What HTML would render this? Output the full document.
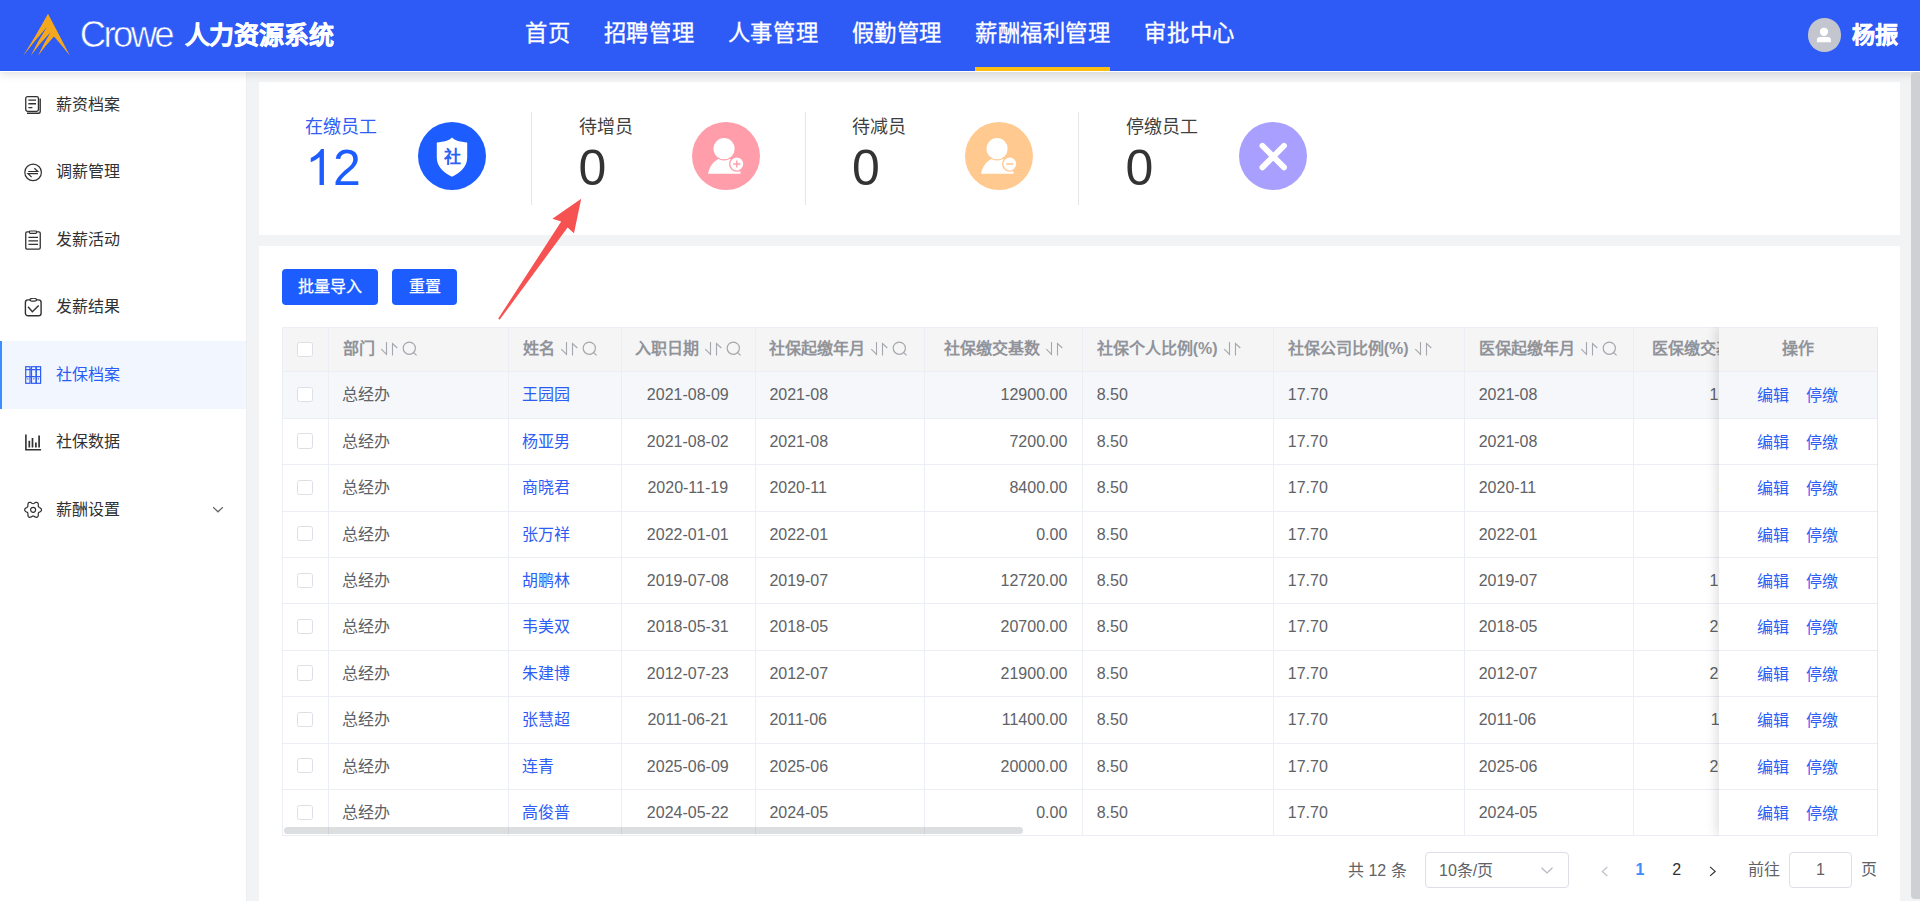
<!DOCTYPE html>
<html lang="zh-CN"><head><meta charset="utf-8"><title>社保档案</title>
<style>
*{box-sizing:border-box;margin:0;padding:0}
html,body{width:1920px;height:901px;overflow:hidden}
body{position:relative;background:#f2f3f5;font-family:"Liberation Sans",sans-serif;font-size:16px;color:#606266}
.abs{position:absolute}
/* header */
#hdr{position:absolute;left:0;top:0;width:1920px;height:70.5px;background:#2e5af6;z-index:20;box-shadow:0 1px 0 #fff,0 3px 9px rgba(0,0,0,.13)}
#hdr .ttl{position:absolute;left:184.500px;top:17.500px;height:34px;line-height:34px;font-size:25px;font-weight:bold;color:#fff;white-space:nowrap;letter-spacing:-.2px;-webkit-text-stroke:.45px #fff}
.nav{position:absolute;top:16.500px;height:34px;line-height:34px;font-size:22.300px;letter-spacing:.62px;color:#fff;white-space:nowrap;-webkit-text-stroke:.3px #fff}
#uline{position:absolute;left:975px;top:67px;width:135px;height:3.5px;background:#fbbf13}
#ava{position:absolute;left:1807.5px;top:18px;width:33.5px;height:33.5px;border-radius:50%;background:#c3c6ce;overflow:hidden}
#uname{position:absolute;left:1851.500px;top:18px;height:34px;line-height:34px;font-size:23px;font-weight:bold;color:#fff;white-space:nowrap;-webkit-text-stroke:.45px #fff}
/* sidebar */
#side{position:absolute;left:0;top:70.5px;width:247px;height:831px;background:#fff;z-index:5;border-right:1px solid #edeef0}
.mi{position:absolute;left:0;width:246px;height:67.5px;line-height:67.5px;color:#303133;font-size:16px;white-space:nowrap}
.mi .tx{position:absolute;left:56px;top:0}
.mi svg{position:absolute;left:24px;top:24.5px}
.mi.act svg{top:24.100px}
.mi.act{line-height:67.200px}
.mi.act{background:#f2f7ff;color:#2a5cf6}
.mi.act:before{content:"";position:absolute;left:0;top:0;width:2.2px;height:100%;background:#3c8dff}
/* cards */
.card{position:absolute;background:#fff}
.lab{position:absolute;font-size:18px;line-height:24px;height:24px;white-space:nowrap;color:#3f3f3f}
.num{position:absolute;font-size:50px;line-height:50px;height:50px;color:#333;white-space:nowrap}
.circ{position:absolute;width:68px;height:68px;border-radius:50%}
.dv{position:absolute;width:1px;background:#e6e6e6;top:112px;height:92.500px}
.btn{position:absolute;top:268.800px;height:35.800px;line-height:36.600px;-webkit-text-stroke:.25px #fff;background:#1d5cff;color:#fff;border-radius:4px;text-align:center;font-size:16px;white-space:nowrap}
/* table */
.tbl{position:absolute;overflow:hidden;color:#606266;font-size:16px}
.tbl>div,.fix>div{position:absolute}
.thbg{background:#f5f5f5}
.hov{background:#f5f7fa}
.hl{left:0;width:1595.400px;height:1px;background:#ebeef5}
.vl{top:0;width:1px;height:100%;background:#ebeef5}
.hrow{left:0;top:0;width:100%}
.row{left:0;width:100%}
.hrow>div,.row>div{position:absolute}
.th{top:0;height:100%;font-weight:bold;color:#909399;white-space:nowrap}
.th .tt{vertical-align:top}
.th svg{position:relative;vertical-align:top}
.th .si{top:13.600px;margin-left:5px}
.th .mg{top:13.500px;margin-left:-1px}
.td{top:0;height:100%;white-space:nowrap}
.td.clip{overflow:hidden}
.lk{color:#2d5df4}
.cb{width:15.4px;height:15.4px;border:1px solid #dcdfe6;border-radius:2.5px;background:#fff}
.hsb{height:7px;border-radius:4px;background:rgba(144,147,153,.31)}
.fix{background:#fff;box-shadow:-3px 0 10px rgba(0,0,0,.12);overflow:visible}
.fix .hl{width:100%}
/* pagination */
.pg{position:absolute;font-size:16px;color:#606266;white-space:nowrap;top:853.600px;height:35px;line-height:35px}
.box{position:absolute;top:852.300px;height:35.700px;border:1px solid #dcdfe6;border-radius:4px;background:#fff}
#vsb{position:absolute;left:1911px;top:72px;width:12px;height:826.500px;border-radius:4px;background:#cfd0d3;z-index:30}

</style></head>
<body>
<!-- header -->
<div id="hdr">
  <svg class="abs" style="left:22px;top:12px" width="50" height="46" viewBox="22 12 50 46">
    <path d="M48 13.800L70 55.700Q61 44.500 54 36.500Q45.500 45.500 38 55.700Q43.500 43.500 50.600 32.200Q40 43 30.700 55.700Q38 40.500 47 27Q34.500 41 23.200 55.700Q36.500 35 48 13.800Z" fill="#f4a81d"/>
  </svg>
  <svg class="abs" style="left:78px;top:12px" width="100" height="46" viewBox="0 0 100 46">
    <text x="1.800" y="35.200" font-family="Liberation Sans, sans-serif" font-size="36.500" letter-spacing="-2.650" fill="#fff" stroke="#2e5af6" stroke-width="0.600">Crowe</text>
  </svg>
  <div class="ttl">人力资源系统</div>
  <div class="nav" style="left:525px">首页</div>
  <div class="nav" style="left:603.8px">招聘管理</div>
  <div class="nav" style="left:727.8px">人事管理</div>
  <div class="nav" style="left:851.6px">假勤管理</div>
  <div class="nav" style="left:975px">薪酬福利管理</div>
  <div class="nav" style="left:1144.4px">审批中心</div>
  <div id="uline"></div>
  <div id="ava"><svg width="33.500" height="33.500" viewBox="0 0 33.500 33.500"><circle cx="16" cy="13.800" r="4.150" fill="#fff"/><path d="M8.900 24.300v-2.400a3 3 0 0 1 3-3h8a3 3 0 0 1 3 3v2.400z" fill="#fff"/></svg></div>
  <div id="uname">杨振</div>
</div>

<!-- sidebar -->
<div id="side">
  <div class="mi" style="top:0"><svg width="20" height="21" viewBox="0 0 20 21" fill="none" stroke="#303133" stroke-width="1.300"><path d="M16.200 3.600v13.200a1.500 1.500 0 0 1-1.500 1.500H3" stroke-width="1.400"/><rect x="1.750" y="1.650" width="12.700" height="14.700" rx="1.800" fill="#fff"/><path d="M4.400 5.100h7.600M4.400 8.800h7.600M4.400 12.600h4" stroke-width="1.400"/></svg><span class="tx">薪资档案</span></div>
  <div class="mi" style="top:67.500px"><svg width="20" height="21" viewBox="0 0 20 21" fill="none" stroke="#303133" stroke-width="1.200"><circle cx="9.100" cy="9.400" r="8.300"/><path d="M4.200 8.500h9.600l-3.400-3.300M14 10.700H4l3.600 3.400"/></svg><span class="tx">调薪管理</span></div>
  <div class="mi" style="top:135px"><svg width="20" height="22" viewBox="0 0 20 22" fill="none" stroke="#303133" stroke-width="1.300"><rect x="1.750" y="1.900" width="14.500" height="17.200" rx="1.400"/><rect x="5.500" y="1" width="7" height="2.400" rx=".6" fill="#fff" stroke-width="1.100"/><path d="M4.400 7.300h9.600M4.400 10.800h9.600M4.400 14.400h9.600"/></svg><span class="tx">发薪活动</span></div>
  <div class="mi" style="top:202.500px"><svg width="20" height="21" viewBox="0 0 20 21" fill="none" stroke="#303133" stroke-width="1.400"><rect x="1.400" y="1.900" width="15.700" height="15.900" rx="2.600"/><ellipse cx="9.250" cy="1.700" rx="3.300" ry="1.500" fill="#fff" stroke-width="1.200"/><path d="M4 8.700l4.400 5.100 6.300-6.200"/></svg><span class="tx">发薪结果</span></div>
  <div class="mi act" style="top:270.400px;height:68px"><svg width="19" height="20" viewBox="0 0 19 20" fill="none" stroke="#2f5df5" stroke-width="1.200"><rect x="1.700" y="1.700" width="4.300" height="16.600"/><rect x="7.500" y="1.700" width="4.700" height="16.600"/><rect x="12.200" y="1.700" width="4.400" height="16.600"/><path d="M1.700 4.600h14.900M1.700 11.600h14.900" stroke-width="1.300"/><path d="M3.850 13.300v1.300M9.850 13.300v1.300M14.400 13.300v1.300" stroke-width="1.200"/></svg><span class="tx">社保档案</span></div>
  <div class="mi" style="top:337.500px"><svg width="20" height="21" viewBox="0 0 20 21" fill="none" stroke="#303133" stroke-width="1.600"><path d="M1.900 1.500v15.300h15.200"/><path d="M5.300 7.700v6.700M8.500 5.100v9.300M11.900 9.500v4.900M15.100 2.400v12" stroke-width="1.700"/></svg><span class="tx">社保数据</span></div>
  <div class="mi" style="top:405px"><svg width="20" height="21" viewBox="0 0 20 21" fill="none" stroke="#303133" stroke-width="1.200" stroke-linejoin="round"><path d="M17.5 9.8L17.4 10.5L16.9 11.2L16.2 11.7L15.4 12.1L14.8 12.5L14.4 12.9L14.3 13.4L14.3 14.1L14.3 15.0L14.2 15.8L13.9 16.6L13.3 17.1L12.6 17.3L11.8 17.2L11.0 16.9L10.3 16.4L9.6 16.1L9.1 16.0L8.6 16.1L7.9 16.4L7.2 16.9L6.4 17.2L5.6 17.3L4.9 17.1L4.3 16.6L4.0 15.8L3.9 15.0L3.9 14.1L3.9 13.4L3.8 12.9L3.4 12.5L2.8 12.1L2.0 11.7L1.3 11.2L0.8 10.5L0.7 9.8L0.8 9.1L1.3 8.4L2.0 7.9L2.8 7.5L3.4 7.1L3.8 6.7L3.9 6.2L3.9 5.5L3.9 4.6L4.0 3.8L4.3 3.0L4.9 2.5L5.6 2.3L6.4 2.4L7.2 2.7L7.9 3.2L8.6 3.5L9.1 3.7L9.6 3.5L10.3 3.2L11.0 2.7L11.8 2.4L12.6 2.3L13.3 2.5L13.9 3.0L14.2 3.8L14.3 4.6L14.3 5.5L14.3 6.2L14.4 6.7L14.8 7.1L15.4 7.5L16.2 7.9L16.9 8.4L17.4 9.1Z"/><circle cx="9.100" cy="9.800" r="2.500"/></svg><span class="tx">薪酬设置</span><svg style="left:211.500px;top:29.500px" width="12" height="9" viewBox="0 0 12 9" fill="none" stroke="#606266" stroke-width="1.200"><path d="M1.200 2.200L6 6.800l4.800-4.600"/></svg></div>
</div>

<!-- stat card -->
<div class="card" style="left:259px;top:82px;width:1641px;height:153px"></div>
<div class="lab" style="left:305px;top:115.200px;color:#2f5df5">在缴员工</div>
<svg class="abs" style="left:305px;top:140px" width="62" height="52" viewBox="0 0 62 52"><path transform="translate(0.300,45) scale(0.024414,-0.024414)" d="M763 0H583V1147Q518 1085 412.500 1023Q307 961 223 930V1104Q374 1175 487 1276Q600 1377 647 1472H763Z" fill="#1d5cff"/><text x="28.100" y="45" font-family="Liberation Sans, sans-serif" font-size="50" fill="#1d5cff">2</text></svg>
<div class="circ" style="left:418px;top:122px;background:#1d5cff">
  <svg width="68" height="68" viewBox="0 0 68 68"><path d="M34 15.600c2.600 2.800 8.400 4.600 15.200 4.800v15.400c0 8.800-7.400 15.200-15.200 19.000C26.200 51 18.800 44.600 18.800 35.800V20.400c6.800-.2 12.600-2 15.200-4.800z" fill="#fff"/><text x="34" y="41.100" text-anchor="middle" font-family="Liberation Sans, sans-serif" font-size="17" font-weight="bold" fill="#2b62f6">社</text></svg>
</div>
<div class="dv" style="left:531px"></div>
<div class="lab" style="left:578.500px;top:115.200px">待增员</div>
<div class="num" style="left:578.500px;top:142.900px">0</div>
<div class="circ" style="left:691.500px;top:122px;background:#ff9daa">
  <svg width="68" height="68" viewBox="0 0 68 68"><path d="M16 51.800C17.400 45 21 39.200 27.200 36.400L37.200 36.400C41.500 38 44.500 41 46.200 45L48.600 50.300L48.600 51.800Z" fill="#fff"/><circle cx="32.100" cy="26.700" r="11.900" fill="#ff9daa"/><circle cx="32.100" cy="26.700" r="10.600" fill="#fff"/><circle cx="44.800" cy="42" r="7.800" fill="#ff9daa"/><circle cx="44.800" cy="42" r="6.400" fill="#fff"/><path d="M41.300 42h7M44.800 38.500v7" stroke="#ff9daa" stroke-width="1.400"/></svg>
</div>
<div class="dv" style="left:805px"></div>
<div class="lab" style="left:852px;top:115.200px">待减员</div>
<div class="num" style="left:852px;top:142.900px">0</div>
<div class="circ" style="left:965px;top:122px;background:#ffc98f">
  <svg width="68" height="68" viewBox="0 0 68 68"><path d="M16 51.800C17.400 45 21 39.200 27.200 36.400L37.200 36.400C41.500 38 44.500 41 46.200 45L48.600 50.300L48.600 51.800Z" fill="#fff"/><circle cx="32.100" cy="26.700" r="11.900" fill="#ffc98f"/><circle cx="32.100" cy="26.700" r="10.600" fill="#fff"/><circle cx="44.800" cy="42" r="7.800" fill="#ffc98f"/><circle cx="44.800" cy="42" r="6.400" fill="#fff"/><path d="M41.300 42h7" stroke="#ffc98f" stroke-width="1.600"/></svg>
</div>
<div class="dv" style="left:1078px"></div>
<div class="lab" style="left:1125.500px;top:115.200px">停缴员工</div>
<div class="num" style="left:1125.500px;top:142.900px">0</div>
<div class="circ" style="left:1238.500px;top:122px;background:#a89fff">
  <svg width="68" height="68" viewBox="0 0 68 68"><path d="M23.400 23.800l21.600 21.600M45 23.800L23.400 45.400" stroke="#fff" stroke-width="5.800" stroke-linecap="round"/></svg>
</div>

<!-- table card -->
<div class="card" style="left:259px;top:246px;width:1641px;height:660px"></div>
<div class="btn" style="left:282px;width:95.500px">批量导入</div>
<div class="btn" style="left:392px;width:65px">重置</div>
<svg class="abs" style="left:490px;top:190px;z-index:8" width="100" height="140" viewBox="490 190 100 140"><path d="M581.200 198.800L552.400 218.800L561.200 221.600L498.200 318.600L499.600 319.800L567.600 227.600L574 233.200Z" fill="#f75252"/></svg>
<div class="tbl" style="left:282.4px;top:327.0px;width:1595.4px;height:509.4px">
<div class="thbg" style="left:0;top:0;width:1594.4px;height:44.4px"></div>
<div class="hov" style="left:0;top:44.4px;width:1594.4px;height:46.4px"></div>
<div class="hl" style="top:0"></div>
<div class="hl" style="top:44.4px"></div>
<div class="hl" style="top:90.8px"></div>
<div class="hl" style="top:137.2px"></div>
<div class="hl" style="top:183.6px"></div>
<div class="hl" style="top:230.0px"></div>
<div class="hl" style="top:276.4px"></div>
<div class="hl" style="top:322.8px"></div>
<div class="hl" style="top:369.2px"></div>
<div class="hl" style="top:415.6px"></div>
<div class="hl" style="top:462.0px"></div>
<div class="hl" style="top:508.4px"></div>
<div class="vl" style="left:0.0px"></div>
<div class="vl" style="left:46.0px"></div>
<div class="vl" style="left:225.8px"></div>
<div class="vl" style="left:338.2px"></div>
<div class="vl" style="left:472.6px"></div>
<div class="vl" style="left:641.8px"></div>
<div class="vl" style="left:799.9px"></div>
<div class="vl" style="left:991.0px"></div>
<div class="vl" style="left:1181.9px"></div>
<div class="vl" style="left:1350.9px"></div>
<div class="vl" style="left:1594.4px"></div>
<div class="hrow" style="height:44.4px;line-height:44.4px">
<div class="cb" style="left:14.9px;top:14.5px"></div>
<div class="th" style="left:60.4px;width:160.0px;text-align:left"><span class="tt">部门</span><svg class="si" width="22" height="16" viewBox="0 0 22 16"><path d="M6.500 1V13.500L1.300 8.100M12.500 14.400V2.600L17.300 7" fill="none" stroke="#a4a7ad" stroke-width="1.100"/></svg><svg class="mg" width="17" height="16" viewBox="0 0 17 16"><circle cx="8.300" cy="7.200" r="6.100" fill="none" stroke="#a4a7ad" stroke-width="1.200"/><path d="M12.600 11.600L15.600 14.400" stroke="#a4a7ad" stroke-width="1.200" fill="none"/></svg></div>
<div class="th" style="left:240.2px;width:98.0px;text-align:left"><span class="tt">姓名</span><svg class="si" width="22" height="16" viewBox="0 0 22 16"><path d="M6.500 1V13.500L1.300 8.100M12.500 14.400V2.600L17.300 7" fill="none" stroke="#a4a7ad" stroke-width="1.100"/></svg><svg class="mg" width="17" height="16" viewBox="0 0 17 16"><circle cx="8.300" cy="7.200" r="6.100" fill="none" stroke="#a4a7ad" stroke-width="1.200"/><path d="M12.600 11.600L15.600 14.400" stroke="#a4a7ad" stroke-width="1.200" fill="none"/></svg></div>
<div class="th" style="left:352.6px;width:119.0px;text-align:left"><span class="tt">入职日期</span><svg class="si" width="22" height="16" viewBox="0 0 22 16"><path d="M6.500 1V13.500L1.300 8.100M12.500 14.400V2.600L17.300 7" fill="none" stroke="#a4a7ad" stroke-width="1.100"/></svg><svg class="mg" width="17" height="16" viewBox="0 0 17 16"><circle cx="8.300" cy="7.200" r="6.100" fill="none" stroke="#a4a7ad" stroke-width="1.200"/><path d="M12.600 11.600L15.600 14.400" stroke="#a4a7ad" stroke-width="1.200" fill="none"/></svg></div>
<div class="th" style="left:487.0px;width:154.0px;text-align:left"><span class="tt">社保起缴年月</span><svg class="si" width="22" height="16" viewBox="0 0 22 16"><path d="M6.500 1V13.500L1.300 8.100M12.500 14.400V2.600L17.300 7" fill="none" stroke="#a4a7ad" stroke-width="1.100"/></svg><svg class="mg" width="17" height="16" viewBox="0 0 17 16"><circle cx="8.300" cy="7.200" r="6.100" fill="none" stroke="#a4a7ad" stroke-width="1.200"/><path d="M12.600 11.600L15.600 14.400" stroke="#a4a7ad" stroke-width="1.200" fill="none"/></svg></div>
<div class="th" style="left:641.8px;width:143.3px;text-align:right"><span class="tt">社保缴交基数</span><svg class="si" width="22" height="16" viewBox="0 0 22 16"><path d="M6.500 1V13.500L1.300 8.100M12.500 14.400V2.600L17.300 7" fill="none" stroke="#a4a7ad" stroke-width="1.100"/></svg></div>
<div class="th" style="left:814.3px;width:176.0px;text-align:left"><span class="tt">社保个人比例(%)</span><svg class="si" width="22" height="16" viewBox="0 0 22 16"><path d="M6.500 1V13.500L1.300 8.100M12.500 14.400V2.600L17.300 7" fill="none" stroke="#a4a7ad" stroke-width="1.100"/></svg></div>
<div class="th" style="left:1005.4px;width:176.0px;text-align:left"><span class="tt">社保公司比例(%)</span><svg class="si" width="22" height="16" viewBox="0 0 22 16"><path d="M6.500 1V13.500L1.300 8.100M12.500 14.400V2.600L17.300 7" fill="none" stroke="#a4a7ad" stroke-width="1.100"/></svg></div>
<div class="th" style="left:1196.3px;width:154.0px;text-align:left"><span class="tt">医保起缴年月</span><svg class="si" width="22" height="16" viewBox="0 0 22 16"><path d="M6.500 1V13.500L1.300 8.100M12.500 14.400V2.600L17.300 7" fill="none" stroke="#a4a7ad" stroke-width="1.100"/></svg><svg class="mg" width="17" height="16" viewBox="0 0 17 16"><circle cx="8.300" cy="7.200" r="6.100" fill="none" stroke="#a4a7ad" stroke-width="1.200"/><path d="M12.600 11.600L15.600 14.400" stroke="#a4a7ad" stroke-width="1.200" fill="none"/></svg></div>
<div class="th" style="left:1370.1px;width:66.3px;overflow:hidden;white-space:nowrap"><span class="tt">医保缴交基数</span></div>
</div>
<div class="row" style="top:44.4px;height:46.4px;line-height:48.4px">
<div class="cb" style="left:14.9px;top:15.5px"></div>
<div class="td" style="left:59.7px;width:150px">总经办</div>
<div class="td lk" style="left:239.5px;width:95px">王园园</div>
<div class="td" style="left:338.2px;width:134.4px;text-align:center">2021-08-09</div>
<div class="td" style="left:487.0px;width:120px">2021-08</div>
<div class="td" style="left:641.8px;width:143.1px;text-align:right">12900.00</div>
<div class="td" style="left:814.3px;width:120px">8.50</div>
<div class="td" style="left:1005.4px;width:120px">17.70</div>
<div class="td" style="left:1196.3px;width:120px">2021-08</div>
<div class="td clip" style="left:1350.9px;width:85.5px"><span style="position:absolute;right:-57.5px;top:0">12900.00</span></div>
</div>
<div class="row" style="top:90.8px;height:46.4px;line-height:48.4px">
<div class="cb" style="left:14.9px;top:15.5px"></div>
<div class="td" style="left:59.7px;width:150px">总经办</div>
<div class="td lk" style="left:239.5px;width:95px">杨亚男</div>
<div class="td" style="left:338.2px;width:134.4px;text-align:center">2021-08-02</div>
<div class="td" style="left:487.0px;width:120px">2021-08</div>
<div class="td" style="left:641.8px;width:143.1px;text-align:right">7200.00</div>
<div class="td" style="left:814.3px;width:120px">8.50</div>
<div class="td" style="left:1005.4px;width:120px">17.70</div>
<div class="td" style="left:1196.3px;width:120px">2021-08</div>
<div class="td clip" style="left:1350.9px;width:85.5px"><span style="position:absolute;right:-57.5px;top:0">7200.00</span></div>
</div>
<div class="row" style="top:137.2px;height:46.4px;line-height:48.4px">
<div class="cb" style="left:14.9px;top:15.5px"></div>
<div class="td" style="left:59.7px;width:150px">总经办</div>
<div class="td lk" style="left:239.5px;width:95px">商晓君</div>
<div class="td" style="left:338.2px;width:134.4px;text-align:center">2020-11-19</div>
<div class="td" style="left:487.0px;width:120px">2020-11</div>
<div class="td" style="left:641.8px;width:143.1px;text-align:right">8400.00</div>
<div class="td" style="left:814.3px;width:120px">8.50</div>
<div class="td" style="left:1005.4px;width:120px">17.70</div>
<div class="td" style="left:1196.3px;width:120px">2020-11</div>
<div class="td clip" style="left:1350.9px;width:85.5px"><span style="position:absolute;right:-57.5px;top:0">8400.00</span></div>
</div>
<div class="row" style="top:183.6px;height:46.4px;line-height:48.4px">
<div class="cb" style="left:14.9px;top:15.5px"></div>
<div class="td" style="left:59.7px;width:150px">总经办</div>
<div class="td lk" style="left:239.5px;width:95px">张万祥</div>
<div class="td" style="left:338.2px;width:134.4px;text-align:center">2022-01-01</div>
<div class="td" style="left:487.0px;width:120px">2022-01</div>
<div class="td" style="left:641.8px;width:143.1px;text-align:right">0.00</div>
<div class="td" style="left:814.3px;width:120px">8.50</div>
<div class="td" style="left:1005.4px;width:120px">17.70</div>
<div class="td" style="left:1196.3px;width:120px">2022-01</div>
<div class="td clip" style="left:1350.9px;width:85.5px"><span style="position:absolute;right:-57.5px;top:0">0.00</span></div>
</div>
<div class="row" style="top:230.0px;height:46.4px;line-height:48.4px">
<div class="cb" style="left:14.9px;top:15.5px"></div>
<div class="td" style="left:59.7px;width:150px">总经办</div>
<div class="td lk" style="left:239.5px;width:95px">胡鹏林</div>
<div class="td" style="left:338.2px;width:134.4px;text-align:center">2019-07-08</div>
<div class="td" style="left:487.0px;width:120px">2019-07</div>
<div class="td" style="left:641.8px;width:143.1px;text-align:right">12720.00</div>
<div class="td" style="left:814.3px;width:120px">8.50</div>
<div class="td" style="left:1005.4px;width:120px">17.70</div>
<div class="td" style="left:1196.3px;width:120px">2019-07</div>
<div class="td clip" style="left:1350.9px;width:85.5px"><span style="position:absolute;right:-57.5px;top:0">12720.00</span></div>
</div>
<div class="row" style="top:276.4px;height:46.4px;line-height:48.4px">
<div class="cb" style="left:14.9px;top:15.5px"></div>
<div class="td" style="left:59.7px;width:150px">总经办</div>
<div class="td lk" style="left:239.5px;width:95px">韦美双</div>
<div class="td" style="left:338.2px;width:134.4px;text-align:center">2018-05-31</div>
<div class="td" style="left:487.0px;width:120px">2018-05</div>
<div class="td" style="left:641.8px;width:143.1px;text-align:right">20700.00</div>
<div class="td" style="left:814.3px;width:120px">8.50</div>
<div class="td" style="left:1005.4px;width:120px">17.70</div>
<div class="td" style="left:1196.3px;width:120px">2018-05</div>
<div class="td clip" style="left:1350.9px;width:85.5px"><span style="position:absolute;right:-57.5px;top:0">20700.00</span></div>
</div>
<div class="row" style="top:322.8px;height:46.4px;line-height:48.4px">
<div class="cb" style="left:14.9px;top:15.5px"></div>
<div class="td" style="left:59.7px;width:150px">总经办</div>
<div class="td lk" style="left:239.5px;width:95px">朱建博</div>
<div class="td" style="left:338.2px;width:134.4px;text-align:center">2012-07-23</div>
<div class="td" style="left:487.0px;width:120px">2012-07</div>
<div class="td" style="left:641.8px;width:143.1px;text-align:right">21900.00</div>
<div class="td" style="left:814.3px;width:120px">8.50</div>
<div class="td" style="left:1005.4px;width:120px">17.70</div>
<div class="td" style="left:1196.3px;width:120px">2012-07</div>
<div class="td clip" style="left:1350.9px;width:85.5px"><span style="position:absolute;right:-57.5px;top:0">21900.00</span></div>
</div>
<div class="row" style="top:369.2px;height:46.4px;line-height:48.4px">
<div class="cb" style="left:14.9px;top:15.5px"></div>
<div class="td" style="left:59.7px;width:150px">总经办</div>
<div class="td lk" style="left:239.5px;width:95px">张慧超</div>
<div class="td" style="left:338.2px;width:134.4px;text-align:center">2011-06-21</div>
<div class="td" style="left:487.0px;width:120px">2011-06</div>
<div class="td" style="left:641.8px;width:143.1px;text-align:right">11400.00</div>
<div class="td" style="left:814.3px;width:120px">8.50</div>
<div class="td" style="left:1005.4px;width:120px">17.70</div>
<div class="td" style="left:1196.3px;width:120px">2011-06</div>
<div class="td clip" style="left:1350.9px;width:85.5px"><span style="position:absolute;right:-57.5px;top:0">11400.00</span></div>
</div>
<div class="row" style="top:415.6px;height:46.4px;line-height:48.4px">
<div class="cb" style="left:14.9px;top:15.5px"></div>
<div class="td" style="left:59.7px;width:150px">总经办</div>
<div class="td lk" style="left:239.5px;width:95px">连青</div>
<div class="td" style="left:338.2px;width:134.4px;text-align:center">2025-06-09</div>
<div class="td" style="left:487.0px;width:120px">2025-06</div>
<div class="td" style="left:641.8px;width:143.1px;text-align:right">20000.00</div>
<div class="td" style="left:814.3px;width:120px">8.50</div>
<div class="td" style="left:1005.4px;width:120px">17.70</div>
<div class="td" style="left:1196.3px;width:120px">2025-06</div>
<div class="td clip" style="left:1350.9px;width:85.5px"><span style="position:absolute;right:-57.5px;top:0">20000.00</span></div>
</div>
<div class="row" style="top:462.0px;height:46.4px;line-height:48.4px">
<div class="cb" style="left:14.9px;top:15.5px"></div>
<div class="td" style="left:59.7px;width:150px">总经办</div>
<div class="td lk" style="left:239.5px;width:95px">高俊普</div>
<div class="td" style="left:338.2px;width:134.4px;text-align:center">2024-05-22</div>
<div class="td" style="left:487.0px;width:120px">2024-05</div>
<div class="td" style="left:641.8px;width:143.1px;text-align:right">0.00</div>
<div class="td" style="left:814.3px;width:120px">8.50</div>
<div class="td" style="left:1005.4px;width:120px">17.70</div>
<div class="td" style="left:1196.3px;width:120px">2024-05</div>
<div class="td clip" style="left:1350.9px;width:85.5px"><span style="position:absolute;right:-57.5px;top:0">0.00</span></div>
</div>
<div class="hsb" style="left:1.9px;top:499.8px;width:738.7px"></div>
<div class="fix" style="left:1436.4px;top:0;width:158.0px;height:508.4px">
<div class="thbg" style="left:0;top:0;width:100%;height:44.4px"></div>
<div class="hov" style="left:0;top:44.4px;width:100%;height:46.4px"></div>
<div class="hl" style="top:0"></div>
<div class="hl" style="top:44.4px"></div>
<div class="hl" style="top:90.8px"></div>
<div class="hl" style="top:137.2px"></div>
<div class="hl" style="top:183.6px"></div>
<div class="hl" style="top:230.0px"></div>
<div class="hl" style="top:276.4px"></div>
<div class="hl" style="top:322.8px"></div>
<div class="hl" style="top:369.2px"></div>
<div class="hl" style="top:415.6px"></div>
<div class="hl" style="top:462.0px"></div>
<div class="hl" style="top:508.4px"></div>
<div class="th" style="left:0;width:100%;top:0;height:44.4px;line-height:44.4px;text-align:center"><span class="tt">操作</span></div>
<div class="td lk" style="left:38.0px;top:44.4px;line-height:49.8px;width:40px">编辑</div>
<div class="td lk" style="left:87.5px;top:44.4px;line-height:49.8px;width:40px">停缴</div>
<div class="td lk" style="left:38.0px;top:90.8px;line-height:49.8px;width:40px">编辑</div>
<div class="td lk" style="left:87.5px;top:90.8px;line-height:49.8px;width:40px">停缴</div>
<div class="td lk" style="left:38.0px;top:137.2px;line-height:49.8px;width:40px">编辑</div>
<div class="td lk" style="left:87.5px;top:137.2px;line-height:49.8px;width:40px">停缴</div>
<div class="td lk" style="left:38.0px;top:183.6px;line-height:49.8px;width:40px">编辑</div>
<div class="td lk" style="left:87.5px;top:183.6px;line-height:49.8px;width:40px">停缴</div>
<div class="td lk" style="left:38.0px;top:230.0px;line-height:49.8px;width:40px">编辑</div>
<div class="td lk" style="left:87.5px;top:230.0px;line-height:49.8px;width:40px">停缴</div>
<div class="td lk" style="left:38.0px;top:276.4px;line-height:49.8px;width:40px">编辑</div>
<div class="td lk" style="left:87.5px;top:276.4px;line-height:49.8px;width:40px">停缴</div>
<div class="td lk" style="left:38.0px;top:322.8px;line-height:49.8px;width:40px">编辑</div>
<div class="td lk" style="left:87.5px;top:322.8px;line-height:49.8px;width:40px">停缴</div>
<div class="td lk" style="left:38.0px;top:369.2px;line-height:49.8px;width:40px">编辑</div>
<div class="td lk" style="left:87.5px;top:369.2px;line-height:49.8px;width:40px">停缴</div>
<div class="td lk" style="left:38.0px;top:415.6px;line-height:49.8px;width:40px">编辑</div>
<div class="td lk" style="left:87.5px;top:415.6px;line-height:49.8px;width:40px">停缴</div>
<div class="td lk" style="left:38.0px;top:462.0px;line-height:49.8px;width:40px">编辑</div>
<div class="td lk" style="left:87.5px;top:462.0px;line-height:49.8px;width:40px">停缴</div>
</div>
</div>
<!-- pagination -->
<div class="pg" style="left:1348px;top:852.500px">共 12 条</div>
<div class="box" style="left:1425.300px;width:143.400px"></div>
<div class="pg" style="left:1439px;top:852.600px">10条/页</div>
<svg class="abs" style="left:1540px;top:865.500px" width="14" height="9" viewBox="0 0 14 9" fill="none" stroke="#b4b8bf" stroke-width="1.200"><path d="M1.500 1.800L7 7l5.500-5.200"/></svg>
<svg class="abs" style="left:1599.500px;top:863.500px" width="9" height="14" viewBox="0 0 9 14" fill="none" stroke="#c0c4cc" stroke-width="1.300"><path d="M7.300 2.900L2.300 7.400l5 4.500"/></svg>
<div class="pg" style="top:851.600px;left:1628px;width:24px;text-align:center;color:#3d8bff;font-weight:bold">1</div>
<div class="pg" style="top:851.600px;left:1664.600px;width:24px;text-align:center;color:#303133">2</div>
<svg class="abs" style="left:1708px;top:863.500px" width="9" height="14" viewBox="0 0 9 14" fill="none" stroke="#303133" stroke-width="1.200"><path d="M2.100 2.900L7.100 7.400l-5 4.500"/></svg>
<div class="pg" style="left:1748px;top:852px">前往</div>
<div class="box" style="left:1789.300px;width:62.400px"></div>
<div class="pg" style="top:851.700px;left:1789.300px;width:62.400px;text-align:center">1</div>
<div class="pg" style="left:1860.500px;top:852px">页</div>
<div id="vsb"></div>

</body></html>
